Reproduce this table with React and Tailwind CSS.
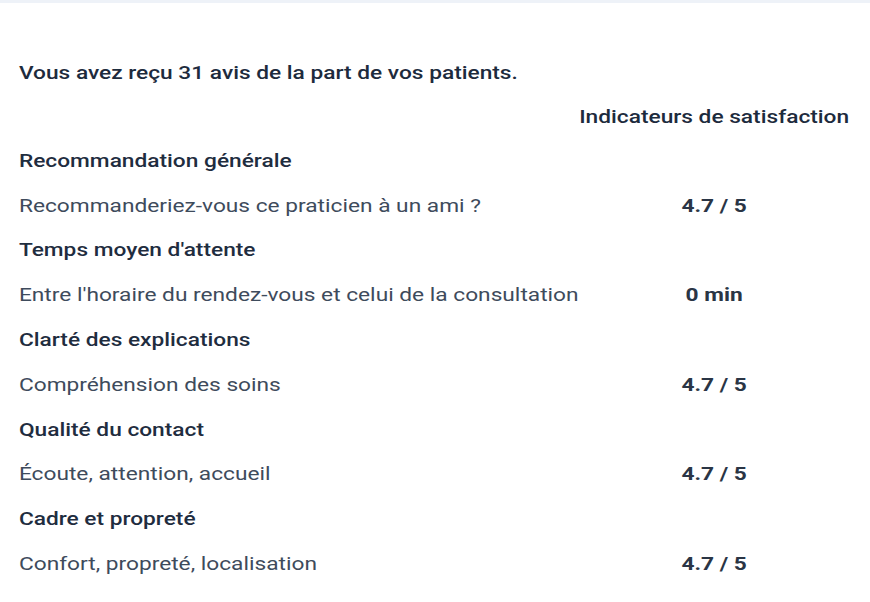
const sections = [
  { title: 'Recommandation générale', label: 'Recommanderiez-vous ce praticien à un ami ?', value: '4.7 / 5' },
  { title: "Temps moyen d'attente", label: "Entre l'horaire du rendez-vous et celui de la consultation", value: '0 min' },
  { title: 'Clarté des explications', label: 'Compréhension des soins', value: '4.7 / 5' },
  { title: 'Qualité du contact', label: 'Écoute, attention, accueil', value: '4.7 / 5' },
  { title: 'Cadre et propreté', label: 'Confort, propreté, localisation', value: '4.7 / 5' },
];

export default function App() {
  return (
    <div className="min-h-[602px] w-[870px] overflow-hidden bg-white font-['Roboto','Liberation_Sans',sans-serif] text-[18px]">
      <div className="h-[3px] bg-[#eef2f8]" />
      {/* the capture is stretched horizontally, so the block is laid out at 690px and widened */}
      <div className="w-[690px] origin-left scale-x-[1.261] pl-[15px] pr-[17px] pt-[47px]">
        <p className="flex h-[44px] items-center font-medium text-[#1d2b3d]">
          Vous avez reçu 31 avis de la part de vos patients.
        </p>
        <div className="grid grid-cols-[1fr_215px]">
          <div className="h-[44px]" />
          <div className="flex h-[44px] items-center justify-center font-medium text-[#1d2b3d]">
            Indicateurs de satisfaction
          </div>
          {sections.map((s) => (
            <div key={s.title} className="contents">
              <div className="col-span-2 flex h-[44.8px] items-center font-medium text-[#1f2d3f]">
                {s.title}
              </div>
              <div className="flex h-[44.8px] items-center whitespace-nowrap text-[#3e4b5c]">{s.label}</div>
              <div className="flex h-[44.8px] items-center justify-center font-bold text-[#2a3545]">
                {s.value}
              </div>
            </div>
          ))}
        </div>
      </div>
    </div>
  );
}
